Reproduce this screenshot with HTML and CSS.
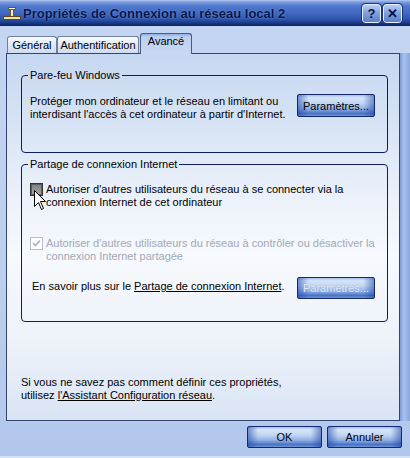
FILE: index.html
```
<!DOCTYPE html>
<html lang="fr">
<head>
<meta charset="utf-8">
<link rel="stylesheet" href="styles.css">
</head>
<body>
<div class="window">
  <div class="titlebar">
    <svg class="ticon" width="18" height="14" viewBox="0 0 18 14">
      <rect x="7.5" y="1.5" width="3" height="8" fill="#f4ecc8" stroke="#6a5a28"/>
      <rect x="5.5" y="0.5" width="7" height="2" fill="#fff6d8" stroke="#6a5a28"/>
      <rect x="0.5" y="9.5" width="17" height="3" fill="#f0e0a0" stroke="#5a4a20"/>
    </svg>
    <span class="title">Propriétés de Connexion au réseau local 2</span>
    <span class="cbtn">?</span>
    <span class="cbtn">✕</span>
  </div>
  <div class="client">
    <div class="tabs">
      <div class="tab t1">Général</div>
      <div class="tab t2">Authentification</div>
      <div class="tab t3 active">Avancé</div>
    </div>
    <div class="panerow">
      <div class="panel">
        <fieldset class="group g1">
          <legend>Pare-feu Windows</legend>
          <div class="fwrow">
            <p class="fwtext">Protéger mon ordinateur et le réseau en limitant ou<br>interdisant l'accès à cet ordinateur à partir d'Internet.</p>
            <button class="btn params">Paramètres...</button>
          </div>
        </fieldset>
        <fieldset class="group g2">
          <legend>Partage de connexion Internet</legend>
          <div class="check first">
            <span class="box pressed">
              <svg class="cursor" width="13" height="21" viewBox="0 0 13 21"><path d="M0.5 0.5 L0.5 16.5 L4.5 12.5 L7.5 19.5 L9.5 18.5 L6.5 11.5 L11.5 11.5 Z" fill="#fff" stroke="#000"/></svg>
            </span>
            <p>Autoriser d'autres utilisateurs du réseau à se connecter via la<br>connexion Internet de cet ordinateur</p>
          </div>
          <div class="check second disabled">
            <span class="box"><svg width="11" height="11" viewBox="0 0 11 11"><path d="M2 5 L4.5 7.5 L9 2.5" fill="none" stroke="#a8adb8" stroke-width="1.6"/></svg></span>
            <p>Autoriser d'autres utilisateurs du réseau à contrôler ou désactiver la<br>connexion Internet partagée</p>
          </div>
          <div class="morerow">
            <p>En savoir plus sur le <u>Partage de connexion Internet</u>.</p>
            <button class="btn params dis">Paramètres...</button>
          </div>
        </fieldset>
        <p class="hint">Si vous ne savez pas comment définir ces propriétés,<br>utilisez <u>l'Assistant Configuration réseau</u>.</p>
      </div>
      <div class="edge"></div>
    </div>
    <div class="actions">
      <button class="btn ok">OK</button>
      <button class="btn cancel">Annuler</button>
    </div>
  </div>
</div>
</body>
</html>
```

FILE: styles.css
```
* { box-sizing: border-box; }
html, body { margin: 0; padding: 0; }
body {
  width: 410px; height: 458px; overflow: hidden;
  font-family: "Liberation Sans", Arial, sans-serif;
  font-size: 11px; line-height: 13px; color: #000;
  background: #b8ccee;
}
p { margin: 0; }
.window {
  height: 458px; display: flex; flex-direction: column;
  background: linear-gradient(#c4d6f2, #bccfef 60%, #b2c7ec);
  border-bottom: 2px solid #d4e2f8;
}
.titlebar {
  height: 26px; flex: none; display: flex; align-items: center;
  padding: 0 8px 0 3px;
  background: linear-gradient(#b4c8f0 0, #7c9ce0 2px, #5079cc 6px, #4068c0 13px, #2f56ad 19px, #1a3a86 23px, #0c2260 26px);
}
.ticon { margin: 1px 2px 0 0; }
.title {
  flex: 1; font-weight: bold; font-size: 13px; color: #08164a;
  text-shadow: 0 0 2px rgba(160,190,240,0.6);
}
.cbtn {
  width: 19px; height: 19px; margin-left: 2px;
  display: flex; align-items: center; justify-content: center;
  border: 1px solid #e8f0ff; border-radius: 3px;
  outline: 1px solid #1c3478;
  background: linear-gradient(#b8cff2, #7e9fdc 50%, #5a80cc);
  color: #06124a; font-weight: bold; font-size: 13px;
}
.client { flex: 1; display: flex; flex-direction: column; padding: 7px 0 0 6px; }
.tabs { display: flex; height: 20px; align-items: flex-end; padding-left: 1px; position: relative; z-index: 1; }
.tab {
  height: 17px; border: 1px solid #6f7f9f; border-bottom: none;
  border-radius: 3px 3px 0 0; text-align: center; padding-top: 2px;
  background: linear-gradient(#fbfdff, #e2ebf8 40%, #cedcf2);
}
.t1 { width: 50px; }
.t2 { width: 82px; }
.t3 { width: 52px; margin-left: 1px; }
.tab.active {
  height: 21px; margin-bottom: -1px; padding-top: 1px;
  border-color: #4a5a80;
  background: linear-gradient(#8eaee4, #bcd0f0 3px, #c8d8f1);
}
.panerow { display: flex; height: 368px; }
.panel {
  width: 394px; border: 1px solid #34446e;
  background: linear-gradient(#c6d7f1 0%, #d8e4f5 20%, #eef3fb 42%, #f6f9fd 55%, #eef3fa 78%, #d9e4f4 100%);
  padding: 15px 11px 0 14px;
}
.edge {
  width: 10px;
  background: linear-gradient(to right, #7d9bd8, #a9c1ec 40%, #9ab4e6 70%, #86a4de);
}
.group {
  margin: 0; min-width: 0;
  border: 1px solid #101e5c; border-radius: 4px;
  padding: 12px 12px 31px 8px;
}
.group legend { padding: 0 2px; margin-left: -2px; line-height: 13px; }
.fwrow { display: flex; justify-content: space-between; align-items: flex-start; }
.fwtext { margin-top: 1px; }
.btn {
  font-family: inherit; font-size: 11px; color: #000;
  border: 1px solid #14286a; border-radius: 2px; padding: 0;
  background:
    linear-gradient(to right, rgba(30,70,170,0.55), rgba(30,70,170,0) 14%, rgba(30,70,170,0) 86%, rgba(30,70,170,0.55)),
    linear-gradient(#a6c0ec 0%, #d6e4f8 14%, #c2d5f2 40%, #93b2e6 65%, #4a72c4 88%, #7096d6 100%);
}
.params { width: 78px; height: 23px; }
.btn.dis { height: 22px; color: #e2eaf6; text-shadow: 0 0 1px #7f9ccc; }
.g2 { margin-top: 5px; padding-bottom: 22px; }
.check { display: flex; align-items: flex-start; gap: 3px; }
.check.second { margin-top: 28px; }
.box {
  width: 13px; height: 13px; flex: none; position: relative;
  border: 1px solid #a4acbc; background: #fff;
  display: flex; align-items: center; justify-content: center;
}
.box.pressed {
  border-color: #343434;
  background: linear-gradient(#7c7c7c, #aaaaaa);
  box-shadow: inset 0 0 0 1px #5c5c5c;
}
.cursor { position: absolute; left: 3px; top: 6px; }
.disabled p { color: #a2a8b4; }
.disabled .box { border-color: #b8bfcc; }
.morerow {
  margin-top: 14px; display: flex; justify-content: space-between; align-items: center;
  padding-left: 2px;
}
.morerow p { margin-top: -3px; }
.hint { margin-top: 54px; }
.actions { display: flex; justify-content: flex-end; gap: 5px; padding: 5px 8px 0 0; }
.ok, .cancel { width: 75px; height: 22px; }
```
